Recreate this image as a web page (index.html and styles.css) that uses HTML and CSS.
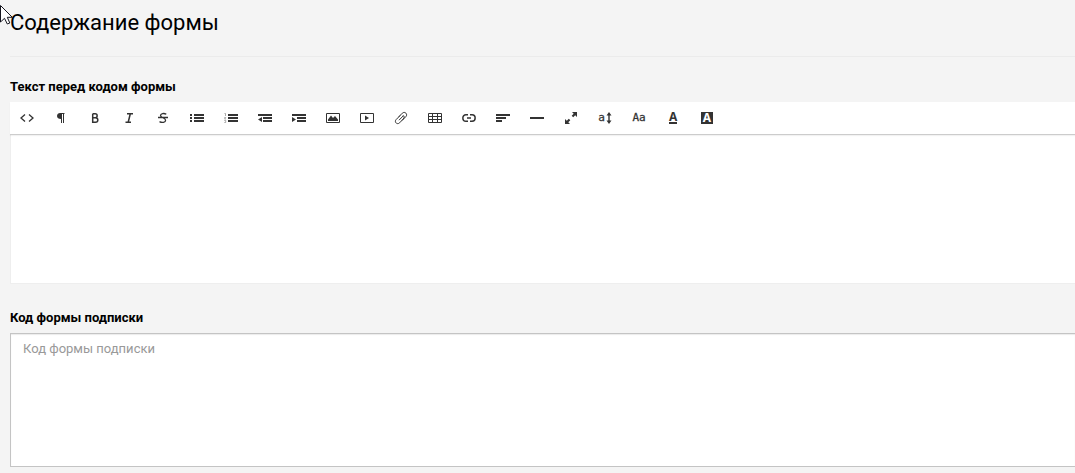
FILE: index.html
```
<!DOCTYPE html>
<html lang="ru">
<head>
<meta charset="utf-8">
<title>Содержание формы</title>
<link rel="stylesheet" href="styles.css">
</head>
<body>
<svg class="cursor" viewBox="0 0 13 20" aria-hidden="true"><path d="M.5 .5V17L4.500 13.300L7.300 19L9.800 18L7.300 12.300H12.300Z" fill="#fff" stroke="#15151f"/></svg>
<main class="page">
  <h1 class="title">Содержание формы</h1>
  <section class="field">
    <label class="label" for="intro">Текст перед кодом формы</label>
    <div class="editor">
      <div class="toolbar" role="toolbar" aria-label="Форматирование">
        <button class="tool" type="button" aria-label="HTML"><svg class="icon line medium" viewBox="0 0 14 14"><path d="M5 3.500L1 7L5 10.500M9 3.500L13 7L9 10.500"/></svg></button>
        <button class="tool" type="button" aria-label="Абзац"><svg class="icon" viewBox="0 0 14 14"><path d="M6 2H10.500V3H10V12H9V3H8V12H7V8C4.500 8 3 7 3 5S4.500 2 6 2Z"/></svg></button>
        <button class="tool" type="button" aria-label="Полужирный"><svg class="icon line thick" viewBox="0 0 14 14"><path d="M4.700 2.700V11.300H7.500C10.600 11.300 10.600 6.800 7.500 6.800H4.700M7.200 6.800C9.800 6.800 9.800 2.700 7.200 2.700H4.700"/></svg></button>
        <button class="tool" type="button" aria-label="Курсив"><svg class="icon line thick" viewBox="0 0 14 14"><path d="M5 2.700H11M3.500 11.300H9M8.300 2.700L6.200 11.300"/></svg></button>
        <button class="tool" type="button" aria-label="Зачёркнутый"><svg class="icon line medium" viewBox="0 0 14 14"><path d="M10.300 3.300C8 1.800 4.500 2.500 4.500 4.600C4.500 7 9.600 6.500 9.600 9.200C9.600 11.500 6 12 3.500 10.600M2 6.500H12"/></svg></button>
        <button class="tool" type="button" aria-label="Маркированный список"><svg class="icon" viewBox="0 0 14 14"><path d="M0 3H2V5H0ZM0 6H2V8H0ZM0 9H2V11H0ZM4 3H14V5H4ZM4 6H14V8H4ZM4 9H14V11H4Z"/></svg></button>
        <button class="tool" type="button" aria-label="Нумерованный список"><svg class="icon" viewBox="0 0 14 14"><path d="M4 3H14V5H4ZM4 6H14V8H4ZM4 9H14V11H4Z"/><path d="M.500 2.500H1.500V5M.300 6.500H1.700L.5 8H2M.3 9.500H1.700V11.500H.3" fill="none" stroke="#888" stroke-width=".7"/></svg></button>
        <button class="tool" type="button" aria-label="Уменьшить отступ"><svg class="icon" viewBox="0 0 14 14"><path d="M0 3H14V5H0ZM5 6H14V8H5ZM5 9H14V11H5ZM4 6V11L0 8.500Z"/></svg></button>
        <button class="tool" type="button" aria-label="Увеличить отступ"><svg class="icon" viewBox="0 0 14 14"><path d="M0 3H14V5H0ZM5 6H14V8H5ZM5 9H14V11H5ZM0 6V11L4 8.500Z"/></svg></button>
        <button class="tool" type="button" aria-label="Изображение"><svg class="icon" viewBox="0 0 14 14"><path d="M.5 2.500H13.500V11.500H.5Z" fill="none" stroke="currentColor"/><path d="M2 10V8.500L5 4.500L7 7L9 5L12 8.500V10Z"/></svg></button>
        <button class="tool" type="button" aria-label="Видео"><svg class="icon" viewBox="0 0 14 14"><path d="M.5 2.500H13.500V11.500H.5Z" fill="none" stroke="currentColor"/><path d="M5 4.500L9 7L5 9.500Z"/></svg></button>
        <button class="tool" type="button" aria-label="Файл"><svg class="icon line" viewBox="0 0 14 14"><path d="M5 9.200L9.300 4.800M8 9.500L11.800 5.700C14.200 3.300 10.800-.2 8.300 2.200L4.800 5.700M6.200 4.500L2.200 8.500C-.2 10.900 3.200 14.200 5.600 11.800L9.300 8C11.200 6 9.500 4 8.700 4.800"/></svg></button>
        <button class="tool" type="button" aria-label="Таблица"><svg class="icon line" viewBox="0 0 14 14"><path d="M.5 2.500H13.500V11.500H.5ZM.5 5.500H13.500M.5 8.500H13.500M4.500 2.500V11.500M9.500 2.500V11.500"/></svg></button>
        <button class="tool" type="button" aria-label="Ссылка"><svg class="icon line thick" viewBox="0 0 14 14"><path d="M6 10.300H4C-.2 10.300-.2 3.700 4 3.700H6M8 3.700H10C14.200 3.700 14.200 10.300 10 10.300H8M5 7H9"/></svg></button>
        <button class="tool" type="button" aria-label="Выравнивание"><svg class="icon" viewBox="0 0 14 14"><path d="M0 3H14V5H0ZM0 6H10V8H0ZM0 9H6V11H0Z"/></svg></button>
        <button class="tool" type="button" aria-label="Линия"><svg class="icon" viewBox="0 0 14 14"><path d="M0 6H14V8H0Z"/></svg></button>
        <button class="tool" type="button" aria-label="На весь экран"><svg class="icon" viewBox="0 0 14 14"><path d="M8 1H13V6L11.200 4.300L9.200 6.300L7.700 4.800L9.700 2.800ZM1 8L2.800 9.700L4.800 7.700L6.300 9.200L4.300 11.200L6 13H1Z"/></svg></button>
        <button class="tool" type="button" aria-label="Размер шрифта"><span class="glyph mono">a</span><svg class="arrow" viewBox="0 0 6 12"><path d="M3 0L5.500 3.500H3.700V8.500H5.500L3 12L.5 8.500H2.300V3.500H.5Z"/></svg></button>
        <button class="tool" type="button" aria-label="Шрифт"><span class="glyph mono">Aa</span></button>
        <button class="tool" type="button" aria-label="Цвет текста"><span class="glyph underlined">A</span></button>
        <button class="tool" type="button" aria-label="Цвет фона"><span class="glyph inverse">A</span></button>
      </div>
      <textarea class="content" id="intro"></textarea>
    </div>
  </section>
  <section class="field">
    <label class="label" for="code">Код формы подписки</label>
    <textarea class="code" id="code" placeholder="Код формы подписки"></textarea>
  </section>
</main>
</body>
</html>
```
FILE: styles.css
```
* { box-sizing: border-box; }
body {
  margin: 0;
  background: #f4f4f4;
  color: #000;
  font-family: Roboto, "Noto Sans", sans-serif;
  font-size: 13px;
  overflow: hidden;
}
.cursor { position: absolute; left: 0; top: 5px; width: 13px; height: 20px; }
.page { padding-left: 10px; }
.title {
  margin: 0 0 20px;
  padding: 7px 0 17px;
  border-bottom: 1px solid #ebebeb;
  font-size: 22px;
  line-height: 32px;
  font-weight: 400;
}
.field { margin-bottom: 24px; }
.label {
  display: block;
  margin-bottom: 5px;
  font-weight: 700;
  line-height: 20px;
}
.toolbar {
  display: flex;
  position: relative;
  height: 33px;
  background: #fff;
  border-bottom: 1px solid #ccc;
  box-shadow: 0 1px 1px rgba(0, 0, 0, .05);
}
.tool {
  display: flex;
  flex: none;
  align-items: center;
  justify-content: center;
  gap: 1px;
  width: 34px;
  padding: 0;
  border: 0;
  background: none;
  color: #333;
}
.icon { width: 14px; height: 14px; fill: currentColor; }
.line { fill: none; stroke: currentColor; stroke-width: 1; }
.medium { stroke-width: 1.3; }
.thick { stroke-width: 1.5; }
.arrow { width: 6px; height: 12px; fill: currentColor; }
.glyph { font: 700 12px/12px "Noto Sans", sans-serif; }
.mono { font: 11px/12px "DejaVu Sans Mono", monospace; -webkit-text-stroke: 0.3px #333; }
.underlined { width: 8px; border-bottom: 2px solid #333; line-height: 10px; }
.inverse { width: 12px; background: #333; color: #fff; }
.content, .code {
  display: block;
  width: 100%;
  margin: 0;
  border-radius: 0;
  background: #fff;
  resize: none;
  outline: 0;
  font: inherit;
}
.content { height: 149px; padding: 12px; border: 1px solid #eee; border-top: 0; border-right: 0; }
.code {
  height: 134px;
  padding: 5px 12px;
  border: 1px solid #c4c4c4;
  border-right: 0;
  box-shadow: inset 0 1px 1px rgba(0, 0, 0, .08);
  line-height: 20px;
}
.code::placeholder { color: #999; opacity: 1; }
```
